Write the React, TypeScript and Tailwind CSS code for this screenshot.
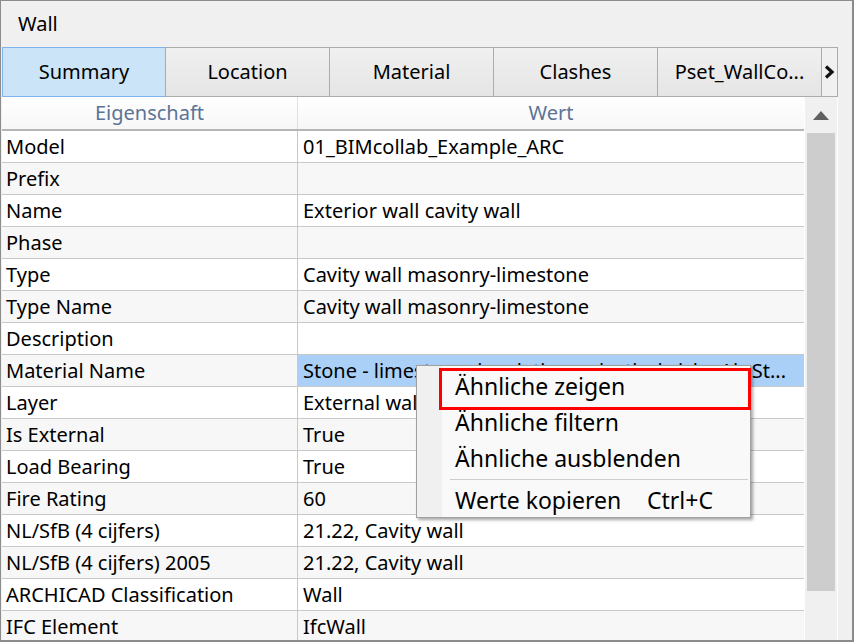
import React from "react";

const rows: [string, string][] = [
  ["Model", "01_BIMcollab_Example_ARC"],
  ["Prefix", ""],
  ["Name", "Exterior wall cavity wall"],
  ["Phase", ""],
  ["Type", "Cavity wall masonry-limestone"],
  ["Type Name", "Cavity wall masonry-limestone"],
  ["Description", ""],
  ["Material Name", "Stone - limestone, insulation - plastic, brick - Air St..."],
  ["Layer", "External wall"],
  ["Is External", "True"],
  ["Load Bearing", "True"],
  ["Fire Rating", "60"],
  ["NL/SfB (4 cijfers)", "21.22, Cavity wall"],
  ["NL/SfB (4 cijfers) 2005", "21.22, Cavity wall"],
  ["ARCHICAD Classification", "Wall"],
  ["IFC Element", "IfcWall"],
];

const tabs = ["Summary", "Location", "Material", "Clashes", "Pset_WallCo..."];

const ContextMenu = () => (
  <div className="absolute left-[415px] top-[364px] w-[335px] h-[153px] bg-[#f9f9f9] border border-[#a0a0a0] shadow-[2px_2px_3px_rgba(0,0,0,0.35)] text-[23px]">
    <div className="absolute left-0 top-0 bottom-0 w-[25px] bg-[#f0f0f0]" />
    <div className="relative flex flex-col pt-[2px]">
      <div className="h-[36px] flex items-center pl-[38px]">Ähnliche zeigen</div>
      <div className="h-[36px] flex items-center pl-[38px]">Ähnliche filtern</div>
      <div className="h-[36px] flex items-center pl-[38px]">Ähnliche ausblenden</div>
      <div className="h-[7px] flex items-center pl-[33px] pr-[2px]">
        <div className="h-px w-full bg-[#cdcdcd]" />
      </div>
      <div className="h-[34px] flex items-center pl-[38px]">
        <span className="w-[192px]">Werte kopieren</span>
        <span>Ctrl+C</span>
      </div>
    </div>
    {/* annotation highlight */}
    <div className="absolute left-[22px] top-[2px] w-[312px] h-[42px] border-[3px] border-[#ff0000]" />
  </div>
);

export default function App() {
  return (
    <div
      className="relative w-[854px] h-[642px] overflow-hidden bg-[#f0f0f0] border-l border-t border-r-2 border-b-2 border-[#8c8c8c] text-black text-[20px]"
      style={{ fontFamily: '"Noto Sans", "Open Sans", sans-serif' }}
    >
      {/* Title */}
      <div className="h-[46px] flex items-center pl-[17px]">Wall</div>

      {/* Tabs */}
      <div className="flex h-[50px] pl-px w-[837px]">
        {tabs.map((t, i) =>
          i === 0 ? (
            <div
              key={t}
              className="w-[164px] flex items-center justify-center bg-[#cce4f7] border border-[#7eb4ea]"
            >
              {t}
            </div>
          ) : (
            <div
              key={t}
              className="w-[164px] flex items-center justify-center bg-gradient-to-b from-[#f0f0f0] to-[#e5e5e5] border border-l-0 border-[#acacac] whitespace-nowrap overflow-hidden"
            >
              {t}
            </div>
          )
        )}
        <div className="flex-1 flex items-center justify-center bg-[#f0f0f0] border border-l-0 border-[#acacac]">
          <svg width="11" height="14" viewBox="0 0 11 14">
            <path d="M2 1.5 L8 7 L2 12.5" fill="none" stroke="#111" strokeWidth="3.2" />
          </svg>
        </div>
      </div>

      {/* Grid */}
      <div className="flex w-[837px] pl-px">
        <div className="w-[803px] flex flex-col">
          <div className="flex h-[34px] bg-gradient-to-b from-white to-[#f7f7f7] border-b-2 border-[#b5b5b5] text-[#5a7497]">
            <div className="w-[296px] flex items-center justify-center border-r border-[#e0e0e0]">Eigenschaft</div>
            <div className="flex-1 flex items-center justify-center">Wert</div>
          </div>
          {rows.map(([k, v], i) => (
            <div
              key={k}
              className={`flex h-[32px] border-b border-[#c8c8c8] ${i % 2 === 0 ? "bg-white" : "bg-[#f7f7f7]"}`}
            >
              <div className="w-[296px] flex items-center pl-[4px] border-r border-[#c8c8c8] whitespace-nowrap">{k}</div>
              <div
                className={`flex-1 flex items-center pl-[5px] whitespace-nowrap overflow-hidden ${
                  k === "Material Name" ? "bg-[#aad0f8]" : ""
                }`}
              >
                {v}
              </div>
            </div>
          ))}
        </div>
        {/* Scrollbar */}
        <div className="w-[33px] border-l border-white flex flex-col bg-[#f0f0f0] h-[545px]">
          <div className="h-[36px] flex items-center justify-center">
            <svg width="16" height="9" viewBox="0 0 16 9">
              <path d="M0 9 L8 0 L16 9 Z" fill="#606060" />
            </svg>
          </div>
          <div className="mx-[2px] h-[458px] bg-[#cdcdcd]" />
        </div>
        <div className="w-px bg-white h-[545px]" />
      </div>

      <ContextMenu />
    </div>
  );
}
